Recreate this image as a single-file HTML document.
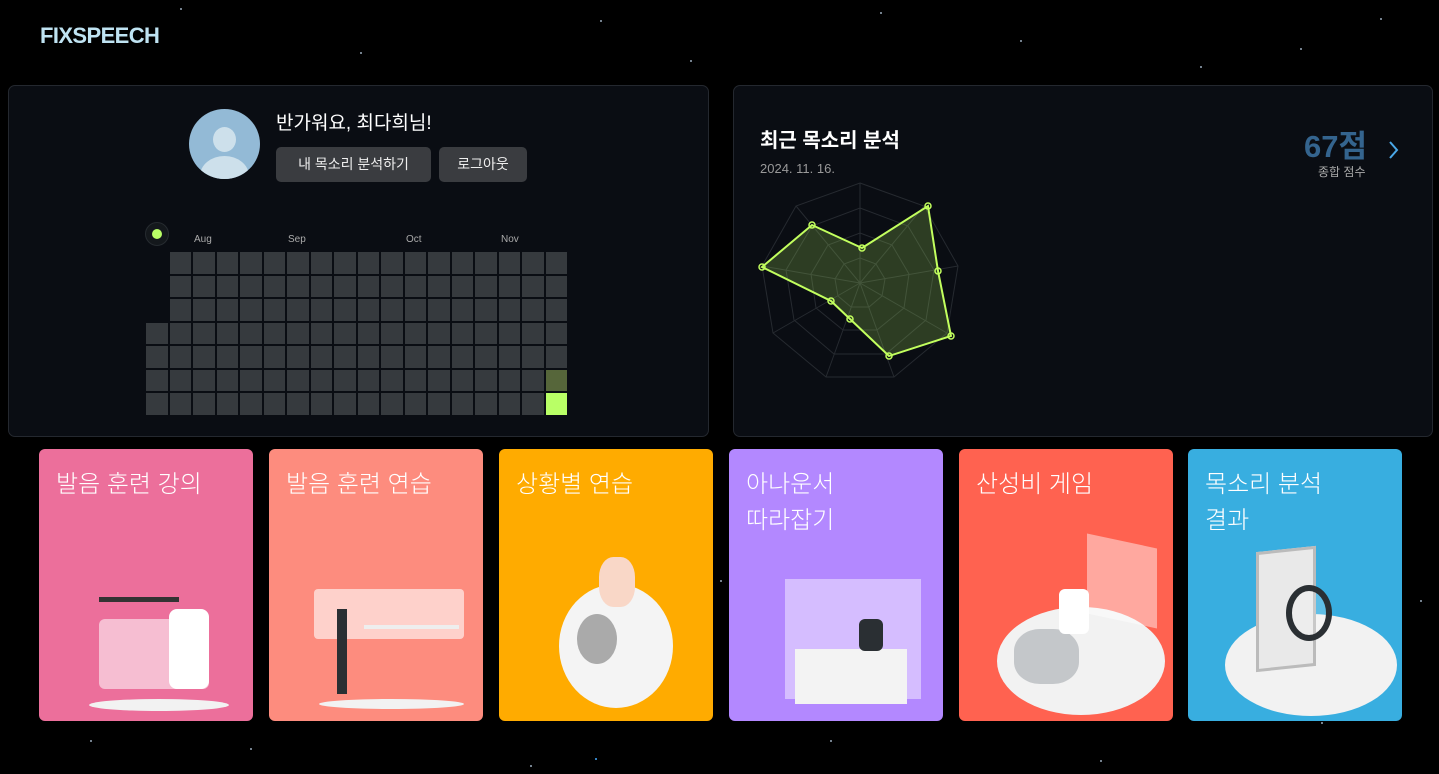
<!DOCTYPE html>
<html><head><meta charset="utf-8">
<style>
*{margin:0;padding:0;box-sizing:border-box}
body{width:1439px;height:774px;overflow:hidden;background:#000;font-family:"Liberation Sans","Noto Sans CJK KR",sans-serif;color:#fff;position:relative}
.star{position:absolute;width:2px;height:2px;background:#9ab;border-radius:50%}
.logo{position:absolute;left:40px;top:23px;font-size:22px;font-weight:bold;color:#bfe3f2;letter-spacing:-0.6px}
.panel{position:absolute;top:85px;height:352px;background:#0a0d13;border:1px solid #24282f;border-radius:7px}
.av{position:absolute;left:189px;top:109px;width:71px;height:70px;border-radius:50%;background:#93bad6;overflow:hidden}
.av .h{position:absolute;left:24px;top:18px;width:23px;height:25px;border-radius:50%;background:#cde0eb}
.av .b{position:absolute;left:11px;top:47px;width:49px;height:40px;border-radius:50%;background:#cde0eb}
.greet{position:absolute;left:276px;top:108px;font-size:19px;color:#fff}
.btn{position:absolute;top:147px;height:35px;background:#3a3c40;border-radius:5px;font-size:14px;line-height:35px;text-align:center;color:#eee}
.dot{position:absolute;left:145px;top:222px;width:24px;height:24px;border-radius:50%;background:#14181c;border:1px solid #262b30}
.dot:after{content:"";position:absolute;left:6px;top:6px;width:10px;height:10px;border-radius:50%;background:#b9ff66}
.mon{position:absolute;top:234px;font-size:10px;color:#aaa}
.grid{position:absolute;left:146px;top:252px;display:grid;grid-template-columns:repeat(18,21.5px);grid-template-rows:repeat(7,21.5px);gap:2px 2px;grid-auto-flow:column}
.grid i{background:#363a3e}
.grid i.e{background:none}.grid i.d{background:#56663a}.grid i.g{background:#b9ff66}
.card{position:absolute;top:449px;width:214px;height:272px;border-radius:6px;overflow:hidden}
.card .t{position:absolute;left:17px;top:18px;font-size:24px;line-height:36px;color:#fff;font-weight:300}
.ell{position:absolute;background:#f2f2f2;border-radius:50%}
</style></head><body>
<div class="star" style="left:180px;top:8px"></div><div class="star" style="left:360px;top:52px"></div><div class="star" style="left:600px;top:20px"></div><div class="star" style="left:690px;top:60px"></div><div class="star" style="left:880px;top:12px"></div><div class="star" style="left:1020px;top:40px"></div><div class="star" style="left:1200px;top:66px"></div><div class="star" style="left:1380px;top:18px"></div><div class="star" style="left:1300px;top:48px"></div><div class="star" style="left:720px;top:580px"></div><div class="star" style="left:250px;top:748px"></div><div class="star" style="left:530px;top:765px"></div><div class="star" style="left:830px;top:740px"></div><div class="star" style="left:1100px;top:760px"></div><div class="star" style="left:1420px;top:600px"></div><div class="star" style="left:595px;top:758px;background:#4af"></div><div class="star" style="left:1321px;top:722px"></div><div class="star" style="left:90px;top:740px"></div>
<div class="logo">FIXSPEECH</div>

<div class="panel" style="left:8px;width:701px"></div>
<div class="av"><div class="h"></div><div class="b"></div></div>
<div class="greet">반가워요, 최다희님!</div>
<div class="btn" style="left:276px;width:155px">내 목소리 분석하기</div>
<div class="btn" style="left:439px;width:88px">로그아웃</div>
<div class="dot"></div>
<div class="mon" style="left:194px">Aug</div><div class="mon" style="left:288px">Sep</div><div class="mon" style="left:406px">Oct</div><div class="mon" style="left:501px">Nov</div>
<div class="grid">
<i class="e"></i><i class="e"></i><i class="e"></i><i></i><i></i><i></i><i></i>
<i></i><i></i><i></i><i></i><i></i><i></i><i></i><i></i><i></i><i></i><i></i><i></i><i></i><i></i><i></i><i></i><i></i><i></i><i></i><i></i><i></i><i></i><i></i><i></i><i></i><i></i><i></i><i></i><i></i><i></i><i></i><i></i><i></i><i></i><i></i><i></i><i></i><i></i><i></i><i></i><i></i><i></i><i></i><i></i><i></i><i></i><i></i><i></i><i></i><i></i><i></i><i></i><i></i><i></i><i></i><i></i><i></i><i></i><i></i><i></i><i></i><i></i><i></i><i></i><i></i><i></i><i></i><i></i><i></i><i></i><i></i><i></i><i></i><i></i><i></i><i></i><i></i><i></i><i></i><i></i><i></i><i></i><i></i><i></i><i></i><i></i><i></i><i></i><i></i><i></i><i></i><i></i><i></i><i></i><i></i><i></i><i></i><i></i><i></i><i></i><i></i><i></i><i></i><i></i><i></i><i></i><i></i><i></i><i></i><i></i><i></i><i></i>
<i></i><i></i><i></i><i></i><i></i><i class="d"></i><i class="g"></i>
</div>

<div class="panel" style="left:733px;width:700px"></div>
<div style="position:absolute;left:760px;top:124px;font-size:20px;font-weight:bold">최근 목소리 분석</div>
<div style="position:absolute;left:760px;top:161px;font-size:13px;color:#999">2024. 11. 16.</div>
<div style="position:absolute;left:1304px;top:121px;font-size:31px;font-weight:bold;color:#34648e">67점</div>
<div style="position:absolute;left:1318px;top:163px;font-size:12px;color:#aaa">종합 점수</div>
<svg style="position:absolute;left:1384px;top:138px" width="20" height="24"><path d="M6 4 L13 12 L6 20" stroke="#4aa8e8" stroke-width="2" fill="none"/></svg>
<svg style="position:absolute;left:740px;top:170px" width="240" height="230" viewBox="740 170 240 230">
<g fill="none" stroke="#262a30" stroke-width="1">
<polygon points="860,183 924,206 958,266 947,333 894,377 826,377 773,333 762,266 796,206"/>
<polygon points="860,208 908,226 934,270 926,320 886,354 834,354 794,320 786,270 812,226"/>
<polygon points="860,233 892,245 909,274 904,308 877,330 843,330 816,308 811,274 828,245"/>
<polygon points="860,258 876,264 885,279 882,296 869,307 851,307 838,296 835,279 844,264"/>
<path d="M860,283 L860,183 M860,283 L924,206 M860,283 L958,266 M860,283 L947,333 M860,283 L894,377 M860,283 L826,377 M860,283 L773,333 M860,283 L762,266 M860,283 L796,206"/>
</g>
<polygon points="862,248 928,206 938,271 951,336 889,356 850,319 831,301 762,267 812,225" fill="rgba(185,255,102,0.2)" stroke="#c2ff5e" stroke-width="2"/>
<g fill="none" stroke="#c2ff5e" stroke-width="1.5">
<circle cx="862" cy="248" r="3"/><circle cx="928" cy="206" r="3"/><circle cx="938" cy="271" r="3"/><circle cx="951" cy="336" r="3"/><circle cx="889" cy="356" r="3"/><circle cx="850" cy="319" r="3"/><circle cx="831" cy="301" r="3"/><circle cx="762" cy="267" r="3"/><circle cx="812" cy="225" r="3"/>
</g></svg>

<div class="card" style="left:39px;background:#ec6f9b"><div class="t">발음 훈련 강의</div>
<div class="ell" style="left:50px;top:250px;width:140px;height:12px"></div>
<div style="position:absolute;left:60px;top:170px;width:110px;height:70px;background:rgba(255,255,255,.55);border-radius:6px"></div>
<div style="position:absolute;left:130px;top:160px;width:40px;height:80px;background:#fff;border-radius:8px"></div>
<div style="position:absolute;left:60px;top:148px;width:80px;height:5px;background:#333"></div>
</div>
<div class="card" style="left:269px;background:#fd8c7e"><div class="t">발음 훈련 연습</div>
<div style="position:absolute;left:45px;top:140px;width:150px;height:50px;background:rgba(255,255,255,.6);border-radius:4px"></div>
<div style="position:absolute;left:68px;top:160px;width:10px;height:85px;background:#2a2f33"></div>
<div style="position:absolute;left:95px;top:176px;width:95px;height:4px;background:#eee"></div>
<div class="ell" style="left:50px;top:250px;width:145px;height:10px"></div>
</div>
<div class="card" style="left:499px;background:#ffab00"><div class="t">상황별 연습</div>
<div class="ell" style="left:60px;top:135px;width:114px;height:124px;background:#f4f4f4"></div>
<div style="position:absolute;left:78px;top:165px;width:40px;height:50px;background:#aaa;border-radius:50%"></div>
<div style="position:absolute;left:100px;top:108px;width:36px;height:50px;background:#f9d7c7;border-radius:40%"></div>
</div>
<div class="card" style="left:729px;background:#b388ff"><div class="t">아나운서<br>따라잡기</div>
<div style="position:absolute;left:56px;top:130px;width:136px;height:120px;background:rgba(255,255,255,.45)"></div>
<div style="position:absolute;left:66px;top:200px;width:112px;height:55px;background:#f3f3f3"></div>
<div style="position:absolute;left:130px;top:170px;width:24px;height:32px;background:#2a2f33;border-radius:6px"></div>
</div>
<div class="card" style="left:959px;background:#ff6250"><div class="t">산성비 게임</div>
<div class="ell" style="left:38px;top:158px;width:168px;height:108px"></div>
<div style="position:absolute;left:128px;top:92px;width:70px;height:80px;background:rgba(255,255,255,.45);transform:skewY(12deg)"></div>
<div style="position:absolute;left:55px;top:180px;width:65px;height:55px;background:#c4c7ca;border-radius:40%"></div>
<div style="position:absolute;left:100px;top:140px;width:30px;height:45px;background:#fff;border-radius:6px"></div>
</div>
<div class="card" style="left:1188px;background:#38aee0"><div class="t">목소리 분석<br>결과</div>
<div class="ell" style="left:37px;top:165px;width:172px;height:102px"></div>
<div style="position:absolute;left:68px;top:100px;width:60px;height:120px;background:#e9e9e9;border:3px solid #bbb;transform:skewY(-6deg)"></div>
<div style="position:absolute;left:98px;top:136px;width:46px;height:56px;border:6px solid #2a2f33;border-radius:50%;background:rgba(255,255,255,.2)"></div>
</div>
</body></html>
